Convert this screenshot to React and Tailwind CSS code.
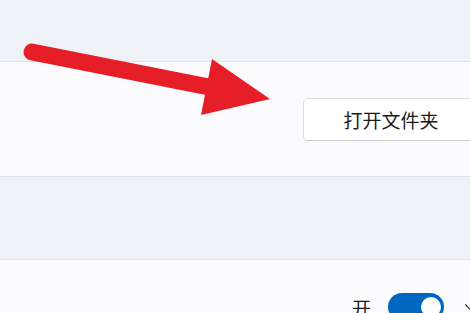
import { ChevronDown } from 'lucide-react'

function Arrow() {
  return (
    <svg
      className="absolute left-0 top-0 pointer-events-none"
      width="470"
      height="313"
      viewBox="0 0 470 313"
    >
      <line x1="32" y1="52" x2="214" y2="88" stroke="#e61e27" strokeWidth="17" strokeLinecap="round" />
      <polygon points="212,59 270,99 201,115" fill="#e61e27" />
    </svg>
  )
}

export default function App() {
  return (
    <div
      className="relative w-[470px] h-[313px] overflow-hidden bg-[#eef1f5] text-[#1b1b1b]"
      style={{ fontFamily: '"Noto Sans CJK SC", "Noto Sans", sans-serif' }}
    >
      <div className="h-[61px]" />

      {/* card with folder button */}
      <div className="h-[116px] border-y border-[#e1e3e7] bg-[#fbfbfd] flex items-center">
        <button className="ml-[303px] w-[180px] h-[43px] shrink-0 rounded-[5px] border border-[#dcdee2] border-b-[#c9cbcf] bg-white text-[19px] leading-none flex items-center justify-center pr-[4px]">
          打开文件夹
        </button>
      </div>

      <div className="h-[82px]" />

      {/* card with toggle */}
      <div className="h-[60px] border-t border-[#e1e3e7] bg-[#fbfbfd] pt-[33px]">
        <div className="flex items-center pl-[352px]">
          <span className="text-[19px] leading-none">开</span>
          <div className="ml-[17px] w-[56px] h-[28px] rounded-full bg-[#0067c0] flex items-center justify-end pr-[3px] shrink-0">
            <div className="w-[20px] h-[20px] rounded-full bg-white" />
          </div>
          <ChevronDown className="ml-[17px] shrink-0" size={18} strokeWidth={1.5} color="#333" />
        </div>
      </div>

      <Arrow />
    </div>
  )
}
